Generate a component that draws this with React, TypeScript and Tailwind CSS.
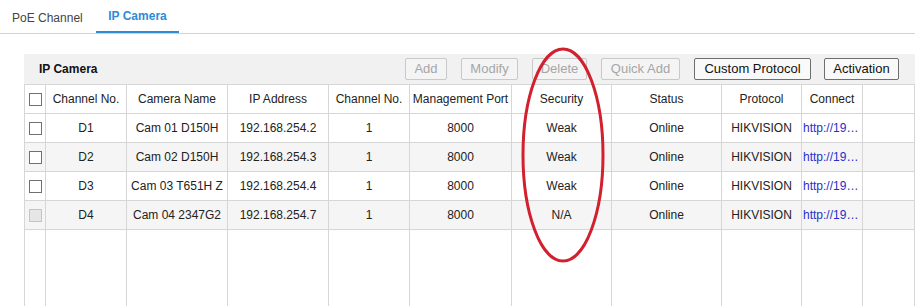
import { ReactNode } from 'react';

const cols = 'grid grid-cols-[21px_81px_101px_101px_81px_102px_100px_110px_80px_61px_1fr]';

const headers = ['Channel No.', 'Camera Name', 'IP Address', 'Channel No.', 'Management Port', 'Security', 'Status', 'Protocol', 'Connect'];

const cameras = [
  { ch: 'D1', name: 'Cam 01 D150H', ip: '192.168.254.2', security: 'Weak', disabled: false },
  { ch: 'D2', name: 'Cam 02 D150H', ip: '192.168.254.3', security: 'Weak', disabled: false },
  { ch: 'D3', name: 'Cam 03 T651H Z', ip: '192.168.254.4', security: 'Weak', disabled: false },
  { ch: 'D4', name: 'Cam 04 2347G2', ip: '192.168.254.7', security: 'N/A', disabled: true },
];

function Checkbox({ disabled }: { disabled?: boolean }) {
  return (
    <span
      className={
        disabled
          ? 'block w-[13px] h-[13px] border border-[#c4c4c4] bg-[#e6e6e6]'
          : 'block w-[13px] h-[13px] border border-[#707070] bg-white'
      }
    />
  );
}

function Cell({ children, className = '' }: { children?: ReactNode; className?: string }) {
  return (
    <div className={`flex items-center justify-center border-r border-b border-[#d6d6d6] whitespace-nowrap overflow-hidden ${className}`}>
      {children}
    </div>
  );
}

function ToolButton({ label, width, disabled }: { label: string; width: string; disabled?: boolean }) {
  return (
    <button
      className={`${width} h-[22px] flex items-center justify-center text-[13px] rounded-[2px] border ${
        disabled ? 'border-[#c9c9c9] text-[#a6a6a6] bg-[#f4f4f4]' : 'border-[#6e6e6e] text-[#111] bg-[#f9f9f9]'
      }`}
    >
      {label}
    </button>
  );
}

export default function App() {
  return (
    <div className="relative w-[915px] h-[306px] overflow-hidden bg-white font-['Liberation_Sans',Arial,sans-serif] text-[12px] text-[#222]">
      {/* tabs */}
      <div className="flex h-[34px] border-b border-[#d3d3d3]">
        <div className="w-[96px] pl-[12px] pt-[9px] text-[#444]">PoE Channel</div>
        <div className="w-[83px] pt-[7px] text-center font-bold text-[#2f8bd6] border-b-2 border-[#2f8bd6]">IP Camera</div>
      </div>

      <div className="ml-[24px] mt-[20px]">
        {/* toolbar */}
        <div className="h-[30px] bg-[#f1f1f1] flex items-center pl-[15px] pr-[16px]">
          <span className="font-bold text-[#111]">IP Camera</span>
          <div className="ml-auto flex items-center gap-[14px]">
            <ToolButton label="Add" width="w-[42px]" disabled />
            <ToolButton label="Modify" width="w-[57px]" disabled />
            <ToolButton label="Delete" width="w-[55px]" disabled />
            <ToolButton label="Quick Add" width="w-[79px]" disabled />
            <ToolButton label="Custom Protocol" width="w-[117px]" />
            <div className="w-[75px] -ml-[1px]">
              <ToolButton label="Activation" width="w-[75px]" />
            </div>
          </div>
        </div>

        {/* table */}
        <div className="border-l border-t border-[#d6d6d6]">
          <div className={`${cols} h-[29px]`}>
            <Cell><Checkbox /></Cell>
            {headers.map((h, i) => (
              <Cell key={i}>{h}</Cell>
            ))}
            <Cell />
          </div>

          {cameras.map((c, i) => (
            <div key={c.ch} className={`${cols} h-[29px] ${i % 2 === 1 ? 'bg-[#f5f5f5]' : 'bg-white'}`}>
              <Cell><Checkbox disabled={c.disabled} /></Cell>
              <Cell>{c.ch}</Cell>
              <Cell>{c.name}</Cell>
              <Cell>{c.ip}</Cell>
              <Cell>1</Cell>
              <Cell>8000</Cell>
              <Cell>{c.security}</Cell>
              <Cell>Online</Cell>
              <Cell>HIKVISION</Cell>
              <Cell className="!justify-start pl-[1px]">
                <span className="block w-[57px] overflow-hidden text-ellipsis text-[#1f2fcc]">http://192.168.254.{i + 2}</span>
              </Cell>
              <Cell />
            </div>
          ))}

          {/* empty space below the rows */}
          <div className={`${cols} h-[90px]`}>
            {Array.from({ length: 11 }).map((_, i) => (
              <div key={i} className="border-r border-[#d6d6d6]" />
            ))}
          </div>
        </div>
      </div>

      {/* red annotation */}
      <svg className="absolute inset-0 pointer-events-none" width="915" height="306">
        <ellipse cx="563" cy="155" rx="40" ry="106" fill="none" stroke="#d3202f" strokeWidth="3" />
      </svg>
    </div>
  );
}
